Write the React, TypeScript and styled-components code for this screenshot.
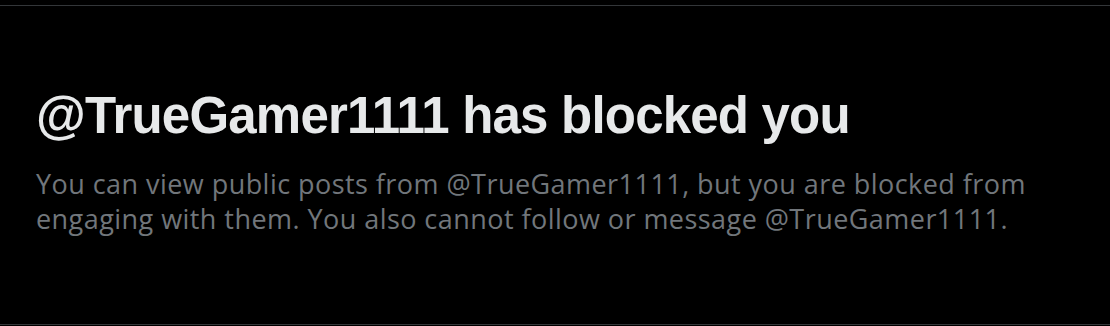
import React from "react";
import styled, { createGlobalStyle } from "styled-components";

const Global = createGlobalStyle`
  html, body { margin: 0; padding: 0; background: #000; }
  #root { width: 1110px; height: 326px; }
`;

const Page = styled.div`
  box-sizing: border-box;
  width: 1110px;
  height: 326px;
  padding-top: 5px;
  padding-bottom: 1px;
  background: #000;
  display: flex;
`;

const Panel = styled.section`
  flex: 1;
  border-top: 1px solid #333639;
  border-bottom: 1px solid #333639;
  padding: 80px 36px 0 36px;
  display: flex;
  flex-direction: column;
`;

const Title = styled.h1`
  margin: 0;
  font-family: "Liberation Sans", Arial, sans-serif;
  font-weight: 700;
  font-size: 51px;
  line-height: 60px;
  letter-spacing: -0.8px;
  color: #e7e9ea;
`;

const Body = styled.p`
  margin: 20px 0 0 0;
  font-family: "Open Sans", "Liberation Sans", Arial, sans-serif;
  font-size: 27px;
  line-height: 35px;
  letter-spacing: 0.45px;
  color: #71767b;
  max-width: 1040px;
`;

export default function App() {
  return (
    <>
      <Global />
      <Page>
        <Panel>
          <Title>@TrueGamer1111 has blocked you</Title>
          <Body>
            You can view public posts from @TrueGamer1111, but you are blocked from engaging with them. You also cannot follow or message @TrueGamer1111.
          </Body>
        </Panel>
      </Page>
    </>
  );
}
